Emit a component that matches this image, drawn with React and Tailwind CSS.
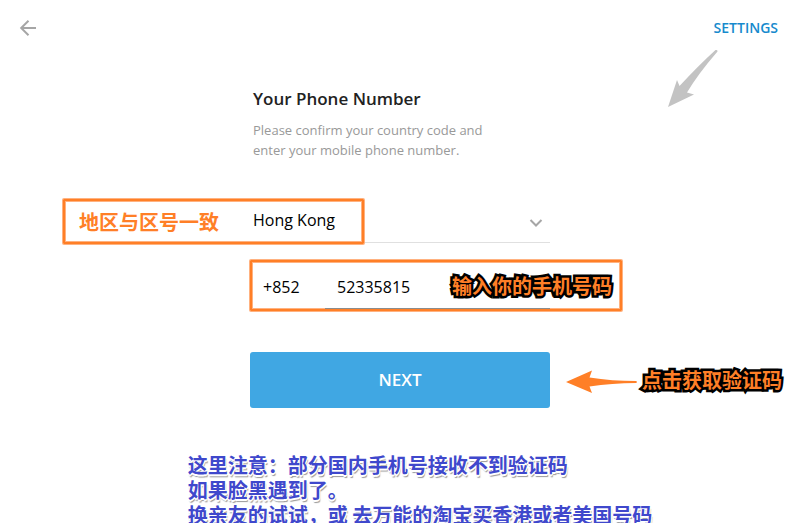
import React from "react";

const NOTE_FONT = "font-['Noto_Sans_CJK_SC',sans-serif] text-[20px] leading-[25px] font-bold whitespace-nowrap";
const OUTLINED =
  "text-[#ff7f27] [-webkit-text-stroke:5px_#000] [paint-order:stroke_fill]";
const FRAME =
  "pointer-events-none absolute flex items-center rounded-[1px] border-2 border-[#ff7f27] shadow-[0_0_0_1px_#ffb280,inset_0_0_0_1px_#ffb280]";

function Header() {
  return (
    <header className="relative flex h-14 items-center justify-between pl-4 pr-[15px]">
      <button type="button" aria-label="Back" className="h-6 w-6">
        <svg viewBox="0 0 24 24" className="h-6 w-6" fill="none" stroke="#a6a6a6" strokeWidth="2">
          <path d="M20 12H5.5M12.5 4.7 5.2 12l7.3 7.3" />
        </svg>
      </button>
      <button type="button" className="text-[14px] leading-5 font-semibold text-[#168acd]">
        SETTINGS
      </button>
      <svg viewBox="0 0 52 60" className="absolute top-[48px] right-[74px] h-[60px] w-[52px]" fill="#c3c3c3">
        <path d="M48.500 2Q32 17 12.500 38L10 32L1 59L27 46.500L20 44.500Q31 26 50.500 3.500Q51 1.500 48.500 2Z" />
      </svg>
    </header>
  );
}

function PhoneForm() {
  return (
    <form className="relative w-[300px]" onSubmit={(e) => e.preventDefault()}>
      <h1 className="pt-[31px] pl-[3px] text-[17px] leading-6 font-semibold text-[#222]">Your Phone Number</h1>
      <p className="mt-[9px] pl-[3px] text-[13px] leading-5 text-[#999]">
        Please confirm your country code and
        <br />
        enter your mobile phone number.
      </p>

      <div className="relative mt-[38px] border-b border-[#e0e0e0]">
        <select
          aria-label="Country"
          defaultValue="hk"
          className="block h-11 w-full appearance-none bg-transparent pl-[3px] text-[16px] leading-6 text-black outline-none"
        >
          <option value="hk">Hong Kong</option>
        </select>
        <svg viewBox="0 0 14 10" className="pointer-events-none absolute top-5 right-[7px] h-[10px] w-[14px]" fill="none" stroke="#a6a6a6" strokeWidth="2">
          <path d="M1.500 2 7 7.500 12.500 2" />
        </svg>
      </div>

      <div className="mt-[22px] flex gap-3">
        <input
          aria-label="Country code"
          defaultValue="+852"
          className="h-11 w-[63px] bg-transparent pl-[13px] text-[16px] leading-6 text-black outline-none"
        />
        <input
          aria-label="Phone number"
          type="tel"
          defaultValue="52335815"
          className="relative z-10 h-11 min-w-0 flex-1 border-b border-[#8c8c8c] bg-transparent pl-3 text-[16px] leading-6 text-black outline-none"
        />
      </div>

      <button type="submit" className="mt-[43px] block h-14 w-full rounded-[3px] bg-[#40a7e3] text-[17px] leading-6 font-semibold text-white">
        NEXT
      </button>

      <div className={`${FRAME} top-[143px] -left-[187px] h-[45px] w-[301px] pl-[14px]`}>
        <span className={`${NOTE_FONT} text-[#ff7f27]`}>地区与区号一致</span>
      </div>
      <div className={`${FRAME} top-[204px] left-0 h-[51px] w-[372px] justify-end pr-2`}>
        <span className={`${NOTE_FONT} ${OUTLINED}`}>输入你的手机号码</span>
      </div>
      <div className="pointer-events-none absolute top-[311px] left-[316px] flex items-start gap-1">
        <svg viewBox="0 0 72 26" className="h-[26px] w-[72px]" fill="#ff7f27">
          <path d="M0 15 26 3.500 23.500 10.500Q46 14 70 14Q72 15 70 16Q46 16 23.500 19.500L26 26Z" />
        </svg>
        <span className={`${NOTE_FONT} ${OUTLINED}`}>点击获取验证码</span>
      </div>
    </form>
  );
}

export default function App() {
  return (
    <div className="h-screen overflow-hidden bg-white font-['Open_Sans',sans-serif]">
      <Header />
      <main className="flex flex-col items-center pl-[7px]">
        <PhoneForm />
        <aside className="mt-11 ml-10">
          <p
            className={`${NOTE_FONT} text-[#3f48cc] [text-shadow:1px_0_0_#fff,-1px_0_0_#fff,0_1px_0_#fff,1px_1px_0_#fff,0_2px_0_#fff,1px_3px_1px_#999]`}
          >
            这里注意：部分国内手机号接收不到验证码
            <br />
            如果脸黑遇到了。
            <br />
            换亲友的试试，或 去万能的淘宝买香港或者美国号码
          </p>
        </aside>
      </main>
    </div>
  );
}
